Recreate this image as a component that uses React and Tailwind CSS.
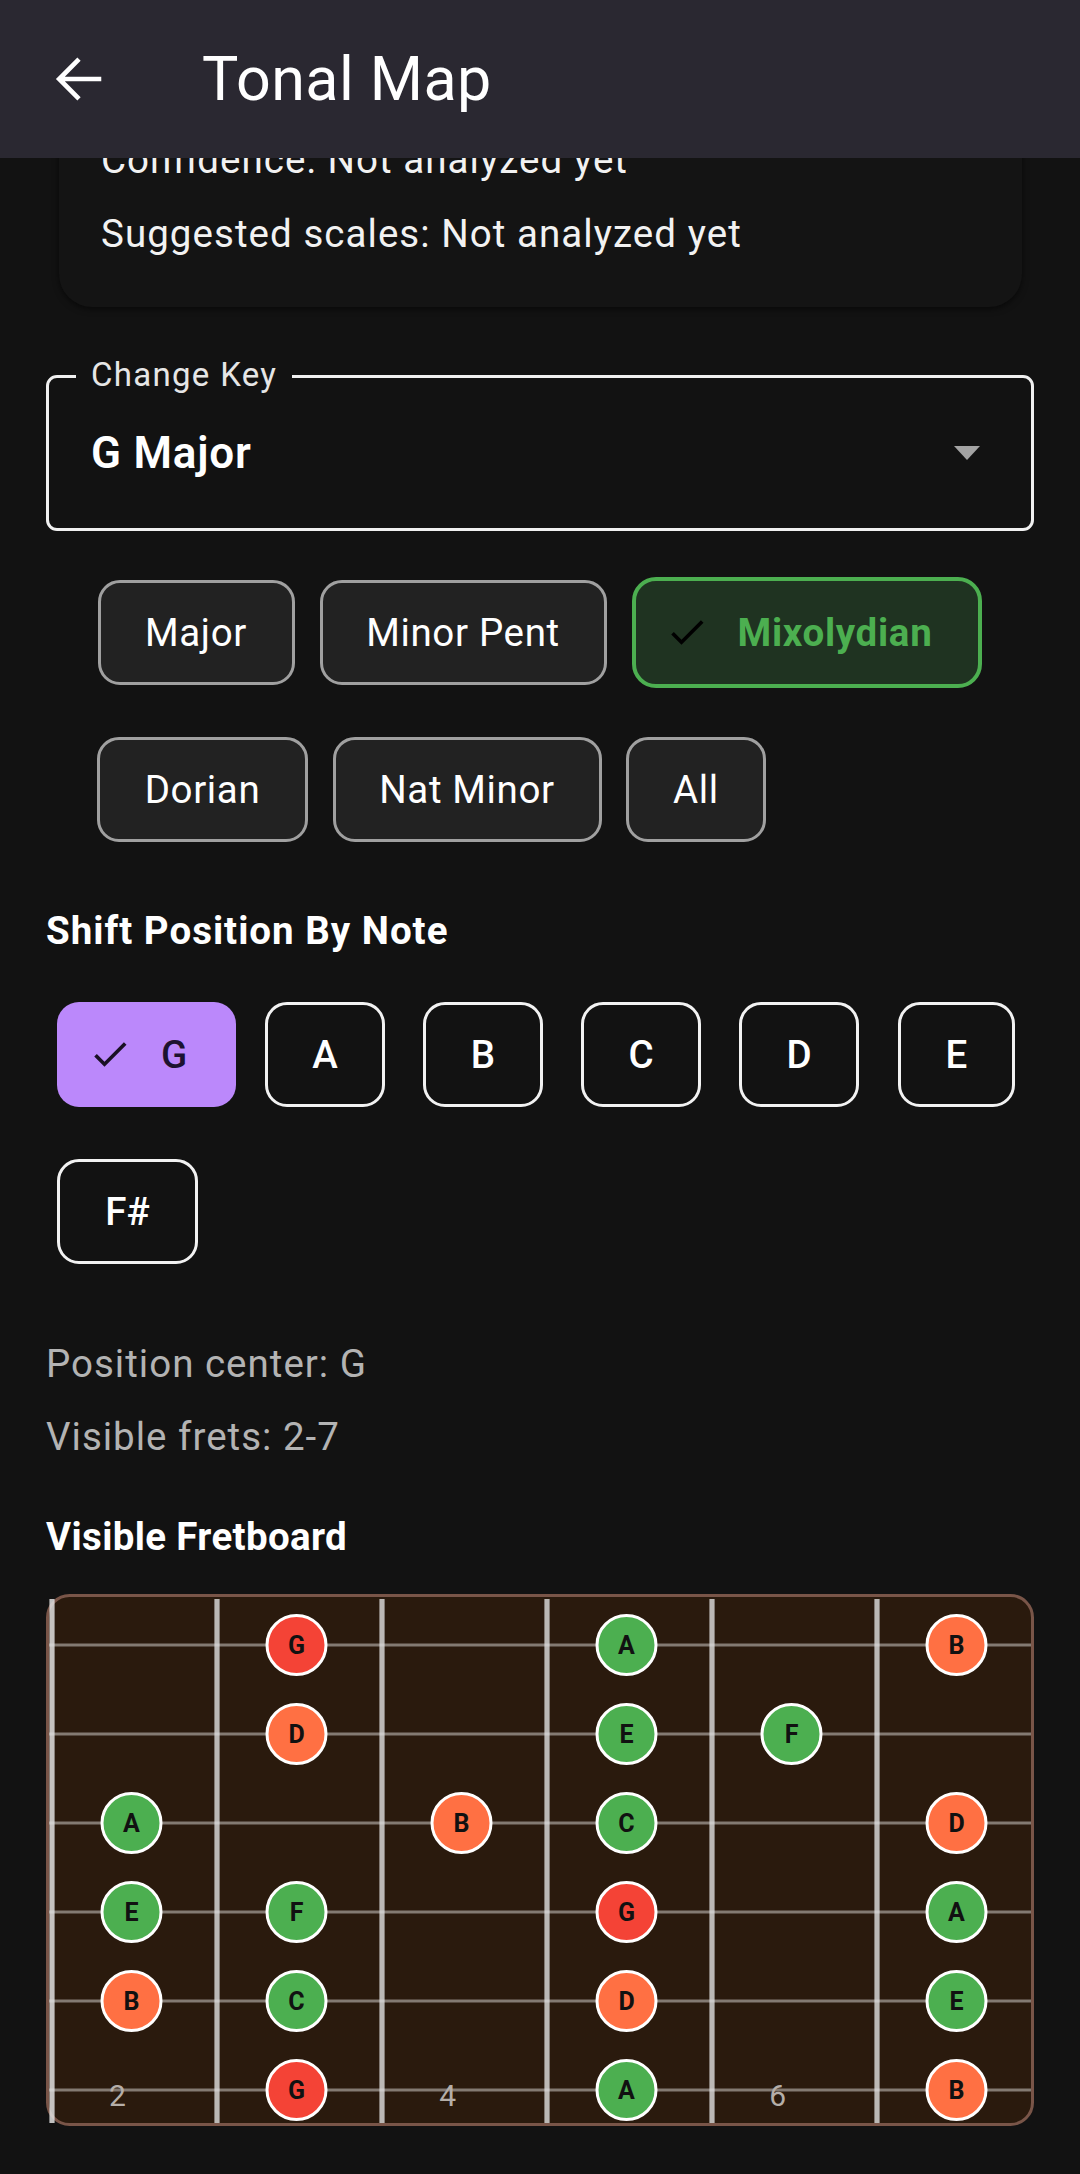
import React from "react";

const RED = "#f44336";
const ORANGE = "#ff7043";
const GREEN = "#4caf50";

const COLS = [85.5, 250.5, 415.5, 580.5, 745.5, 910.5];
const STRINGS = [51, 140, 229, 318, 407, 496];
const FRETS = [6, 171, 336, 501, 666, 831];

const NOTES = [
  [0, 1, "G", RED], [0, 3, "A", GREEN], [0, 5, "B", ORANGE],
  [1, 1, "D", ORANGE], [1, 3, "E", GREEN], [1, 4, "F", GREEN],
  [2, 0, "A", GREEN], [2, 2, "B", ORANGE], [2, 3, "C", GREEN], [2, 5, "D", ORANGE],
  [3, 0, "E", GREEN], [3, 1, "F", GREEN], [3, 3, "G", RED], [3, 5, "A", GREEN],
  [4, 0, "B", ORANGE], [4, 1, "C", GREEN], [4, 3, "D", ORANGE], [4, 5, "E", GREEN],
  [5, 1, "G", RED], [5, 3, "A", GREEN], [5, 5, "B", ORANGE],
];

function Check({ color = "#000" }) {
  return (
    <svg width="44" height="44" viewBox="0 0 24 24" className="shrink-0">
      <path
        d="M9 16.17L4.83 12l-1.42 1.41L9 19 21 7l-1.41-1.41z"
        fill={color}
      />
    </svg>
  );
}

function ScaleChip({ label, w }) {
  return (
    <div
      className="h-[105px] rounded-[22px] border-[3px] border-[#a0a0a0] bg-[#222222] flex items-center justify-center text-[38.5px] tracking-[0.65px] text-white shrink-0"
      style={{ width: w }}
    >
      {label}
    </div>
  );
}

function NoteChip({ label, w, className = "" }) {
  return (
    <div
      className={
        "h-[105px] rounded-[22px] border-[3px] border-[#f2f2f2] flex items-center justify-center text-[38.5px] font-medium text-white shrink-0 " +
        className
      }
      style={{ width: w }}
    >
      {label}
    </div>
  );
}

function Fretboard() {
  return (
    <svg width="988" height="532" viewBox="0 0 988 532" className="block">
      <rect
        x="1.5"
        y="1.5"
        width="985"
        height="529"
        rx="22"
        fill="#2a1a0d"
        stroke="#795548"
        strokeWidth="3"
      />
      {STRINGS.map((y, i) => (
        <rect key={"s" + i} x="3" y={y - 1.5} width="982" height="3" fill="#ffffff" fillOpacity="0.42" />
      ))}
      {FRETS.map((x, i) => (
        <rect key={"f" + i} x={x - 2.6} y="5" width="5.2" height="524" fill="#e0e0e0" fillOpacity={i === 0 ? 0.85 : 0.8} />
      ))}
      {NOTES.map(([s, c, n, col], i) => (
        <g key={"n" + i}>
          <circle cx={COLS[c]} cy={STRINGS[s]} r="29.5" fill={col} stroke="#ffffff" strokeWidth="3" />
          <text
            x={COLS[c]}
            y={STRINGS[s] + 9}
            textAnchor="middle"
            fontFamily="Roboto, sans-serif"
            fontWeight="700"
            fontSize="25"
            fill="#111111"
          >
            {n}
          </text>
        </g>
      ))}
      {[
        [71.5, "2"],
        [401.6, "4"],
        [731.6, "6"],
      ].map(([x, t]) => (
        <text
          key={t}
          x={x}
          y="512"
          textAnchor="middle"
          fontFamily="Roboto, sans-serif"
          fontSize="30"
          fill="#b5aea8"
        >
          {t}
        </text>
      ))}
    </svg>
  );
}

export default function App() {
  return (
    <div className="w-[1080px] h-[2174px] bg-[#121212] overflow-hidden font-[Roboto,sans-serif] text-white">
      {/* App bar */}
      <div className="relative z-10 h-[158px] bg-[#2a2831] flex items-center pl-[46px]">
        <svg width="66" height="66" viewBox="0 0 24 24" className="shrink-0">
          <path
            d="M20.1 12H5.2 M12 4.8L4.8 12L12 19.2"
            fill="none"
            stroke="#ffffff"
            strokeWidth="1.7"
          />
        </svg>
        <div className="ml-[90px] text-[61px] leading-none tracking-[0.45px] text-white">Tonal Map</div>
      </div>

      <div className="px-[46px]">
        {/* Analysis card (scrolled under app bar) */}
        <div className="mt-[-69.6px] mx-[12.5px] rounded-[33px] bg-[#141414] shadow-[0_2px_6px_rgba(0,0,0,0.55)] pt-[44px] pb-[45.7px] px-[42.5px] text-[38.5px] tracking-[1.05px] text-[#f2f2f2]">
          <div className="h-[55px] leading-[55px]">Confidence: Not analyzed yet</div>
          <div className="h-[55px] leading-[55px] mt-[18.6px]">Suggested scales: Not analyzed yet</div>
        </div>

        {/* Change key dropdown */}
        <div className="relative mt-[68px] h-[156px] rounded-[11px] border-[3px] border-[#f0f0f0] flex items-center justify-between pl-[42px] pr-[51px]">
          <div className="absolute left-[27px] top-[-20px] px-[15px] bg-[#121212] text-[33px] leading-[33px] tracking-[1.3px] text-[#e6e6e6]">
            Change Key
          </div>
          <div className="text-[44px] leading-none font-semibold tracking-[0.8px] text-white">G Major</div>
          <svg width="26" height="14" viewBox="0 0 26 14">
            <path d="M0 0 L26 0 L13 14 Z" fill="#a3a3a3" />
          </svg>
        </div>

        {/* Scale chips */}
        <div className="mt-[46.3px] h-[111px] flex items-center gap-[25px] pl-[51.5px]">
          <ScaleChip label="Major" w={197} />
          <ScaleChip label="Minor Pent" w={287} />
          <div className="w-[350px] h-[111px] rounded-[24px] border-[4px] border-[#4caf50] bg-[#1f3321] flex items-center pl-[29px] shrink-0">
            <Check />
            <span className="ml-[29px] text-[38.5px] font-bold tracking-[0.7px] text-[#4caf50]">Mixolydian</span>
          </div>
        </div>
        <div className="mt-[49px] h-[105px] flex items-center gap-[24.5px] pl-[51px]">
          <ScaleChip label="Dorian" w={211} />
          <ScaleChip label="Nat Minor" w={269} />
          <ScaleChip label="All" w={140} />
        </div>

        {/* Shift position */}
        <div className="mt-[69.6px] text-[38.5px] leading-none font-bold tracking-[1px] text-white">
          Shift Position By Note
        </div>
        <div className="mt-[51.6px] flex items-center pl-[11px]">
          <div className="w-[179px] h-[105.5px] rounded-[22px] bg-[#bb88fb] flex items-center pl-[31px] shrink-0">
            <Check color="#1a1024" />
            <span className="ml-[29px] text-[38.5px] font-medium text-[#1d1230]">G</span>
          </div>
          <NoteChip label="A" w={120} className="ml-[29px]" />
          <NoteChip label="B" w={120} className="ml-[38px]" />
          <NoteChip label="C" w={120} className="ml-[38px]" />
          <NoteChip label="D" w={120} className="ml-[38px]" />
          <NoteChip label="E" w={117} className="ml-[39px]" />
        </div>
        <div className="mt-[51.8px] flex pl-[11px]">
          <NoteChip label="F#" w={141} />
        </div>

        {/* Position info */}
        <div className="mt-[80.6px] text-[38.5px] leading-none tracking-[1px] text-[#b3b3b3]">Position center: G</div>
        <div className="mt-[34.5px] text-[38.5px] leading-none tracking-[1px] text-[#b3b3b3]">Visible frets: 2-7</div>

        <div className="mt-[62.2px] text-[38.5px] leading-none font-bold tracking-[0.35px] text-white">Visible Fretboard</div>
        <div className="mt-[37.2px]">
          <Fretboard />
        </div>
      </div>
    </div>
  );
}
